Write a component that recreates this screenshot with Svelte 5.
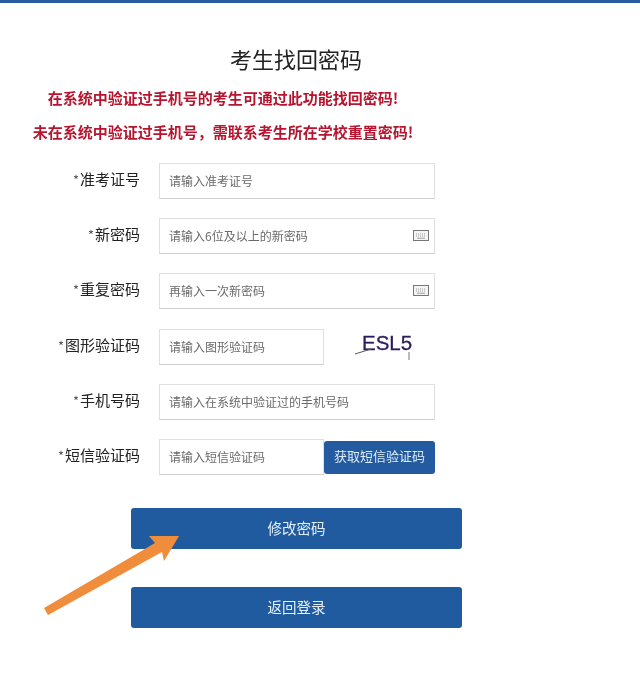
<script>
  const fields = [
    { label: '准考证号', placeholder: '请输入准考证号' },
    { label: '新密码', placeholder: '请输入6位及以上的新密码', keyboard: true },
    { label: '重复密码', placeholder: '再输入一次新密码', keyboard: true },
    { label: '图形验证码', placeholder: '请输入图形验证码', captcha: true },
    { label: '手机号码', placeholder: '请输入在系统中验证过的手机号码' },
    { label: '短信验证码', placeholder: '请输入短信验证码', sms: true }
  ];
</script>

<div class="page">
  <div class="topbar"></div>
  <h1>考生找回密码</h1>
  <div class="notices">
    <p>在系统中验证过手机号的考生可通过此功能找回密码!</p>
    <p>未在系统中验证过手机号&#xFF0C;需联系考生所在学校重置密码!</p>
  </div>

  <form class="fields">
    {#each fields as f}
      <div class="row">
        <label class="label"><span class="star">*</span>{f.label}</label>
        <div class="control">
          <div class="box" class:short={f.captcha || f.sms}>
            <input placeholder={f.placeholder} />
            {#if f.keyboard}
              <svg class="kbd" width="16" height="11" viewBox="0 0 16 11">
                <rect x="0.5" y="0.5" width="15" height="10" fill="#f4f4f4" stroke="#777" />
                <path d="M3 4h10M3 6h10" stroke="#a0a0a0" stroke-dasharray="1 1" fill="none" />
                <path d="M4 8.2h8" stroke="#a0a0a0" fill="none" />
              </svg>
            {/if}
          </div>
          {#if f.captcha}
            <div class="captcha">
              <span>ESL5</span>
              <svg class="noise" width="60" height="30" viewBox="0 0 60 30">
                <path d="M1 24L17 19" stroke="#555" fill="none" />
                <path d="M55 22V30" stroke="#777" fill="none" />
              </svg>
            </div>
          {/if}
          {#if f.sms}
            <button type="button" class="sms">获取短信验证码</button>
          {/if}
        </div>
      </div>
    {/each}
  </form>

  <div class="actions">
    <button type="button" class="wide">修改密码</button>
    <button type="button" class="wide">返回登录</button>
  </div>

  <svg class="arrow" width="150" height="90" viewBox="0 0 150 90">
    <polygon fill="#f08d3c" points="4,77 8,84 122,21 124,30 139,5 109,5 115,12" />
  </svg>
</div>

<style>
  :global(body) {
    margin: 0;
    background: #fff;
  }
  .page {
    position: relative;
    height: 697px;
    overflow: hidden;
    font-family: "Noto Sans CJK SC", "Liberation Sans", sans-serif;
    filter: blur(0.35px);
  }
  .topbar {
    height: 3px;
    background: #2c5a9e;
  }
  h1 {
    margin: 41px 0 0 230px;
    font-size: 22px;
    line-height: 28px;
    font-weight: 400;
    color: #222;
  }
  .notices {
    width: 446px;
    margin-top: 11px;
    text-align: center;
  }
  .notices p {
    height: 30px;
    margin: 0 0 4px;
    font-size: 15px;
    line-height: 30px;
    font-weight: 700;
    color: #b5152f;
  }
  .notices p:last-child {
    margin-bottom: 0;
  }
  .fields {
    display: flex;
    flex-direction: column;
    gap: 19.2px;
    margin-top: 16px;
  }
  .row {
    display: flex;
    align-items: center;
    height: 36px;
  }
  .label {
    width: 140px;
    flex: none;
    padding-bottom: 3px;
    text-align: right;
    font-size: 15px;
    line-height: 20px;
    color: #222;
  }
  .star {
    font-size: 13px;
    margin-right: 1px;
    color: #555;
  }
  .control {
    display: flex;
    align-items: center;
    width: 276px;
    height: 36px;
    margin-left: 19px;
  }
  .box {
    flex: 1;
    display: flex;
    align-items: center;
    height: 100%;
    box-sizing: border-box;
    border: 1px solid #e0e0e0;
    border-bottom-color: #cfcfcf;
    padding: 0 5px 1px 9px;
    background: #fff;
  }
  .box.short {
    flex: none;
    width: 165px;
  }
  input {
    flex: 1;
    min-width: 0;
    border: 0;
    outline: 0;
    padding: 0;
    font: inherit;
    font-size: 12px;
    color: #666;
    background: transparent;
  }
  input::placeholder {
    color: #6a6a6a;
    opacity: 1;
  }
  .kbd {
    flex: none;
  }
  .captcha {
    position: relative;
    margin-left: 38px;
    font-family: "Liberation Sans", sans-serif;
    font-size: 20.5px;
    line-height: 30px;
    color: #2b1d5c;
    -webkit-text-stroke: 0.3px #2b1d5c;
    transform: translateY(-4px);
  }
  .noise {
    position: absolute;
    left: -8px;
    top: 2px;
  }
  .sms {
    flex: none;
    align-self: flex-start;
    width: 111px;
    height: 33px;
    margin-top: 2px;
    border: 0;
    border-radius: 3px;
    padding: 0 0 3px;
    background: #245a9f;
    color: #dcebf8;
    font: inherit;
    font-size: 13px;
  }
  .actions {
    display: flex;
    flex-direction: column;
    gap: 37.5px;
    margin: 33px 0 0 131px;
    width: 331px;
  }
  .wide {
    height: 41.5px;
    border: 0;
    border-radius: 3px;
    padding: 0 0 3px;
    background: #215b9f;
    color: #e4f0fa;
    font: inherit;
    font-size: 14.5px;
  }
  .arrow {
    position: absolute;
    left: 40px;
    top: 531px;
  }
</style>
